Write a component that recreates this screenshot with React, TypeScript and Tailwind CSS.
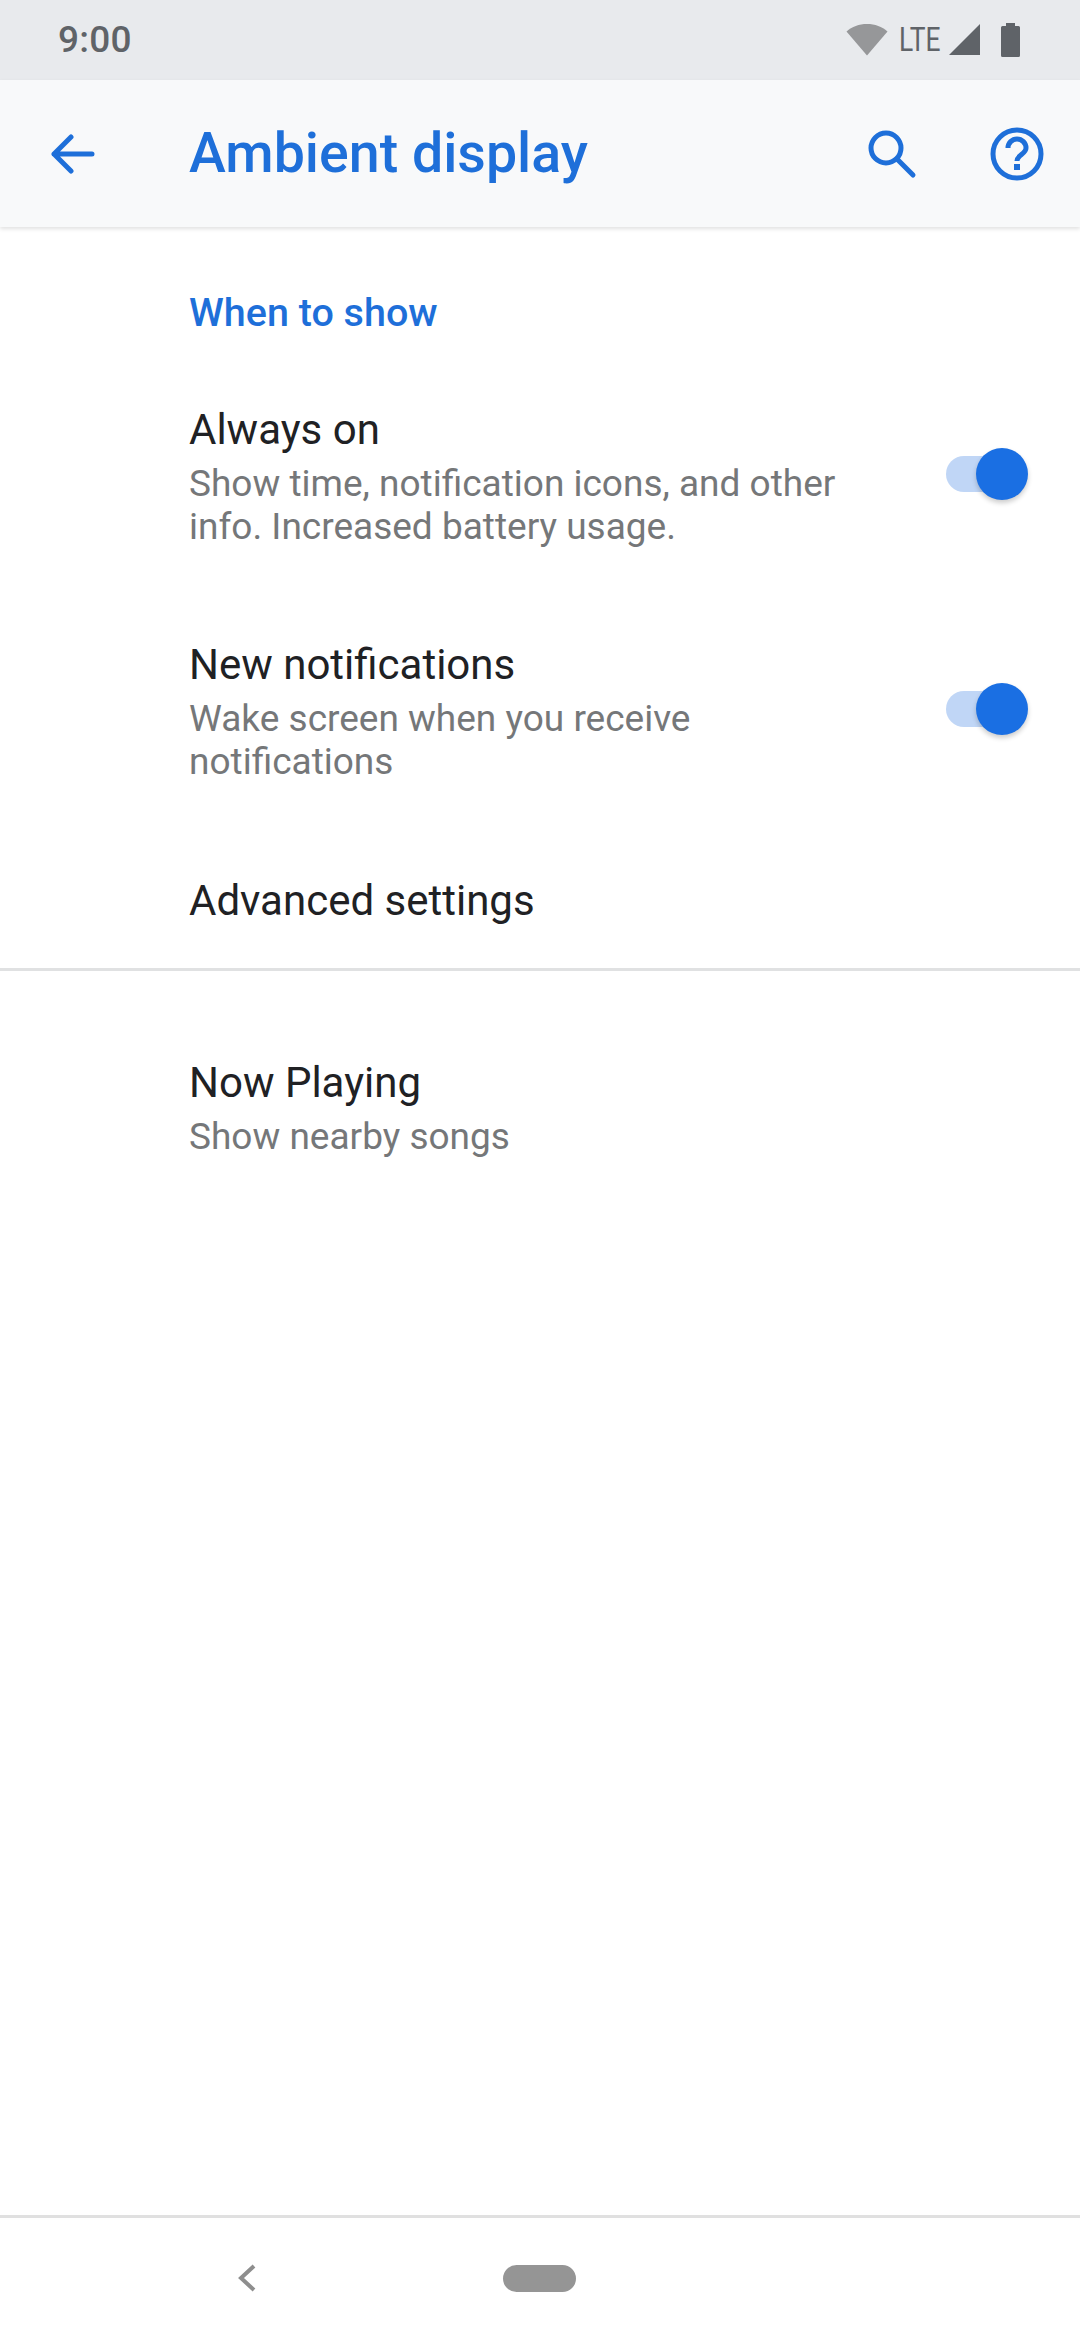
const FONT = "font-['Roboto',sans-serif]";

function Toggle() {
  return (
    <div className="relative w-[82px] h-[54px] shrink-0 -translate-y-[1px]">
      <div className="absolute left-0 top-[8px] w-[72px] h-[36px] rounded-full bg-[#c0d6f6]" />
      <div className="absolute right-0 top-0 w-[52px] h-[52px] rounded-full bg-[#1a6fe3] shadow-[0_3px_5px_rgba(0,0,0,0.2)]" />
    </div>
  );
}

function SwitchRow({ title, lines }: { title: string; lines: string[] }) {
  return (
    <div className="flex items-center justify-between pl-[189px] pr-[52px] h-[158px]">
      <div>
        <div className="text-[42px] leading-[52px] text-[#202124]">{title}</div>
        <div className="text-[37px] leading-[43px] text-[#757779] mt-[6px]">
          {lines.map((l) => (
            <div key={l}>{l}</div>
          ))}
        </div>
      </div>
      <Toggle />
    </div>
  );
}

export default function App() {
  return (
    <div className={`${FONT} w-[1080px] h-[2340px] bg-white flex flex-col overflow-hidden`}>
      {/* Status bar */}
      <div className="h-[80px] bg-[#e8eaed] flex items-center justify-between pl-[58px] pr-[60px] shrink-0">
        <span className="text-[37px] font-medium text-[#5f6368] tracking-[0.2px]">9:00</span>
        <div className="flex items-center">
          <svg width="42" height="32" viewBox="0 0 42 32" className="mr-[11px]">
            <path d="M0.5 7.5C6 2.5 13 0 21 0s15 2.500 20.500 7.500L21 31.500z" fill="#969799" />
          </svg>
          <span className="inline-block w-[43px] whitespace-nowrap origin-left scale-x-[0.8] text-[33px] text-[#5f6368] mr-[7px]">LTE</span>
          <svg width="32" height="32" viewBox="0 0 32 32" className="mr-[20px]">
            <path d="M0 31 31 0v31z" fill="#5f6368" />
          </svg>
          <svg width="19" height="34" viewBox="0 0 19 34">
            <path d="M5 0h9v3h3.500a1.500 1.500 0 0 1 1.500 1.500v28a1.500 1.500 0 0 1-1.500 1.500h-16A1.500 1.500 0 0 1 0 32.500v-28A1.500 1.500 0 0 1 1.500 3H5z" fill="#5f6368" />
          </svg>
        </div>
      </div>

      {/* Toolbar */}
      <div className="h-[147px] bg-[#f8f9fa] flex items-center shrink-0 relative shadow-[0_2px_4px_rgba(0,0,0,0.12)]">
        <div className="w-[189px] pl-[51px]">
          <svg width="44" height="40" viewBox="0 0 44 40" fill="none" stroke="#1e6fd9" strokeWidth="5" strokeLinecap="round" strokeLinejoin="round">
            <path d="M41 20H3M20 3 3 20l17 17" />
          </svg>
        </div>
        <h1 className="flex-1 text-[55.5px] font-medium text-[#1e6fd9]">Ambient display</h1>
        <svg width="50" height="50" viewBox="0 0 50 50" fill="none" stroke="#1e6fd9" strokeWidth="5" strokeLinecap="round" className="mr-[73px]">
          <circle cx="19" cy="19" r="15" />
          <path d="m30 30 16 16" />
        </svg>
        <svg width="54" height="54" viewBox="0 0 54 54" fill="none" className="mr-[36px]">
          <circle cx="27" cy="27" r="24" stroke="#1e6fd9" strokeWidth="5" />
          <path d="M18 21a9 9 0 0 1 18 0c0 6-9 7-9 13" stroke="#1e6fd9" strokeWidth="5" />
          <rect x="24" y="37" width="6" height="6" fill="#1e6fd9" />
        </svg>
      </div>

      {/* Content */}
      <div className="flex-1">
        <div className="pl-[189px] pt-[64px] h-[170px] text-[39.5px] leading-[44px] font-medium text-[#1e6fd9]">When to show</div>
        <SwitchRow title="Always on" lines={["Show time, notification icons, and other", "info. Increased battery usage."]} />
        <div className="h-[77px]" />
        <SwitchRow title="New notifications" lines={["Wake screen when you receive", "notifications"]} />
        <div className="pl-[189px] pt-[85px] h-[178px] text-[42px] leading-[52px] text-[#202124]">Advanced settings</div>
        <div className="h-[3px] bg-[#e0e1e2]" />
        <div className="pl-[189px] pt-[86px]">
          <div className="text-[42px] leading-[52px] text-[#202124]">Now Playing</div>
          <div className="text-[37px] leading-[43px] text-[#757779] mt-[6px]">Show nearby songs</div>
        </div>
      </div>

      {/* Nav bar */}
      <div className="h-[125px] border-t-[3px] border-[#e0e0e0] flex items-center relative shrink-0">
        <svg width="18" height="28" viewBox="0 0 18 28" fill="none" stroke="#8e8e8e" strokeWidth="4" className="ml-[238px] -translate-y-[1px]">
          <path d="M16 2 3 14l13 12" />
        </svg>
        <div className="ml-[247px] w-[73px] h-[27px] rounded-full bg-[#959595] -translate-y-[1px]" />
      </div>
    </div>
  );
}
